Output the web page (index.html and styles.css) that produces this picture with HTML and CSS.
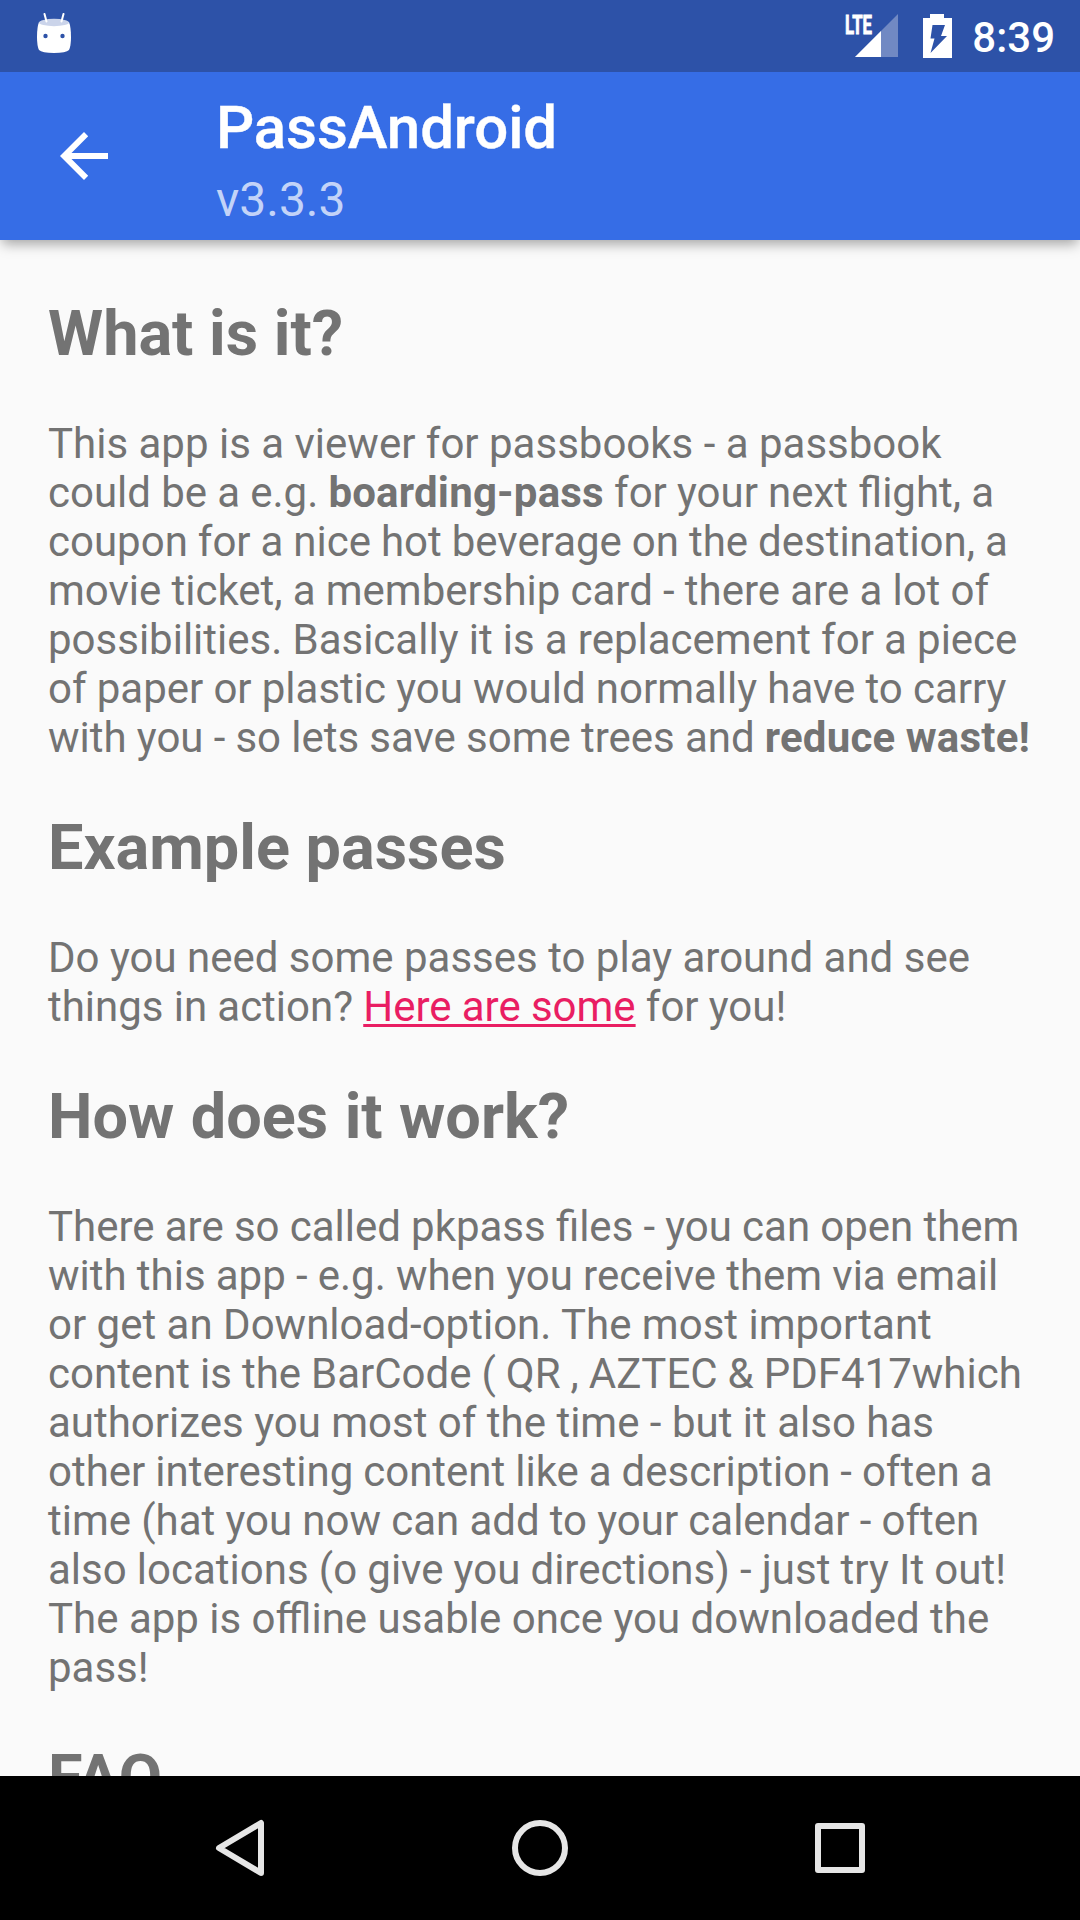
FILE: index.html
```html
<!DOCTYPE html>
<html lang="en">
<head>
<meta charset="utf-8">
<title>PassAndroid</title>
<link rel="stylesheet" href="styles.css">
</head>
<body>
<div class="screen">
  <div class="status-bar">
    <svg class="debug-icon" width="36" height="44" viewBox="0 0 36 44">
      <path d="M3 9Q18 6 33 9Q35 14 35 24Q35 33 33 37Q30 40 18 40T3 37Q1 33 1 24Q1 14 3 9z" fill="#fff"/>
      <ellipse cx="18" cy="9.500" rx="15" ry="3.700" fill="#cbd4ea"/>
      <path d="M8.500 1l2 7.500M27.500 1l-2 7.500" stroke="#fff" stroke-width="2" stroke-linecap="round" fill="none"/>
      <circle cx="9.500" cy="23" r="2.200" fill="#2d52a8"/><circle cx="26.500" cy="23" r="2.200" fill="#2d52a8"/>
    </svg>
    <div class="status-right">
      <svg class="signal-icon" width="54" height="45" viewBox="0 0 54 45">
        <path d="M54 1v43H11z" fill="#7189c3"/>
        <path d="M37 18v26H11z" fill="#fff"/>
        <text class="lte" x="1" y="20.500" textLength="27" lengthAdjust="spacingAndGlyphs">LTE</text>
      </svg>
      <svg class="battery-icon" width="30" height="45" viewBox="0 0 30 45">
        <path d="M8 1h14v4h8v40H1V5h7z" fill="#fff"/>
        <path d="M10.500 12H23l-4 11h6L8.500 40l4-14.500H8.500z" fill="#2d52a8"/>
      </svg>
      <span class="clock">8:39</span>
    </div>
  </div>
  <header class="app-bar">
    <svg class="back-icon" width="48" height="48" viewBox="0 0 48 48">
      <path d="M48 21H11.500L28.200 4.200 24 0 0 24l24 24 4.200-4.200L11.500 27H48z" fill="#fff"/>
    </svg>
    <div class="titles">
      <div class="title">PassAndroid</div>
      <div class="subtitle">v3.3.3</div>
    </div>
  </header>
  <main class="content">
    <h1>What is it?</h1>
    <p>This app is a viewer for passbooks - a passbook<br><span class="snug">could be a e.g. <b>boarding-pass</b> for your next flight, a</span><br><span class="tight">coupon for a nice hot beverage on the destination, a</span><br><span class="snug">movie ticket, a membership card - there are a lot of</span><br><span class="snug">possibilities. Basically it is a replacement for a piece</span><br><span class="snug">of paper or plastic you would normally have to carry</span><br><span class="snug">with you - so lets save some trees and <b>reduce waste!</b></span></p>
    <h1>Example passes</h1>
    <p>Do you need some passes to play around and see<br><span class="snug">things in action? <a href="#">Here are some</a> for you!</span></p>
    <h1 class="wide">How does it work?</h1>
    <p><span class="snug">There are so called pkpass files - you can open them</span><br><span class="snug">with this app - e.g. when you receive them via email</span><br>or get an Download-option. The most important<br><span class="tight">content is the BarCode ( QR , AZTEC &amp; PDF417which</span><br>authorizes you most of the time - but it also has<br><span class="tight">other interesting content like a description - often a</span><br><span class="snug">time (hat you now can add to your calendar - often</span><br><span class="snug">also locations (o give you directions) - just try It out!</span><br>The app is offline usable once you downloaded the<br>pass!</p>
    <h1>FAQ</h1>
  </main>
  <nav class="nav-bar">
    <svg width="60" height="60" viewBox="0 0 60 60"><path d="M51 5v50L9 30z"/></svg>
    <svg width="60" height="60" viewBox="0 0 60 60"><circle cx="30" cy="30" r="25"/></svg>
    <svg width="60" height="60" viewBox="0 0 60 60"><rect x="8" y="8" width="44" height="44"/></svg>
  </nav>
</div>
</body>
</html>
```
FILE: styles.css
```css
body { margin: 0; font-family: Roboto, sans-serif; }
.screen { width: 1080px; height: 1920px; display: flex; flex-direction: column; overflow: hidden; background: #fafafa; }
.status-bar { height: 72px; flex: none; box-sizing: border-box; background: #2d52a8; display: flex; justify-content: space-between; padding: 13px 25px 0 36px; position: relative; z-index: 2; }
.status-right { display: flex; gap: 24px; }
.signal-icon { overflow: visible; }
.lte { font-size: 26px; font-weight: 700; fill: #fff; stroke: #fff; stroke-width: 0.9px; }
.clock { color: #fff; font-size: 42px; line-height: 50px; font-weight: 500; margin-left: -4px; }
.app-bar { height: 168px; flex: none; background: #366de6; display: flex; align-items: center; padding-left: 60px; gap: 108px; box-shadow: 0 6px 12px -2px rgba(0,0,0,.35); position: relative; }
.titles { padding-top: 9px; }
.title { color: #fff; font-size: 60px; line-height: 70px; font-weight: 500; letter-spacing: -0.1px; -webkit-text-stroke: 0.4px #fff; }
.subtitle { color: #c3d3f8; font-size: 48px; line-height: 56px; margin-top: 9px; }
.content { flex: 1; min-height: 0; overflow: hidden; padding: 48px 0 0 48px; color: #737373; white-space: nowrap; }
h1 { margin: 0; font-size: 63px; line-height: 92px; font-weight: 700; }
p { margin: 39px 0 40px; font-size: 42px; line-height: 49px; }
b { letter-spacing: 0.2px; }
.snug { word-spacing: -0.25px; }
.tight { word-spacing: -0.45px; }
.wide { word-spacing: 0.8px; }
a { color: #e91e63; text-decoration-thickness: 2.5px; text-underline-offset: 3px; text-decoration-skip-ink: none; }
.nav-bar { height: 144px; flex: none; background: #000; display: flex; align-items: center; justify-content: center; gap: 240px; }
.nav-bar svg { fill: none; stroke: #e6e6e6; stroke-width: 6; stroke-linejoin: round; }
```
